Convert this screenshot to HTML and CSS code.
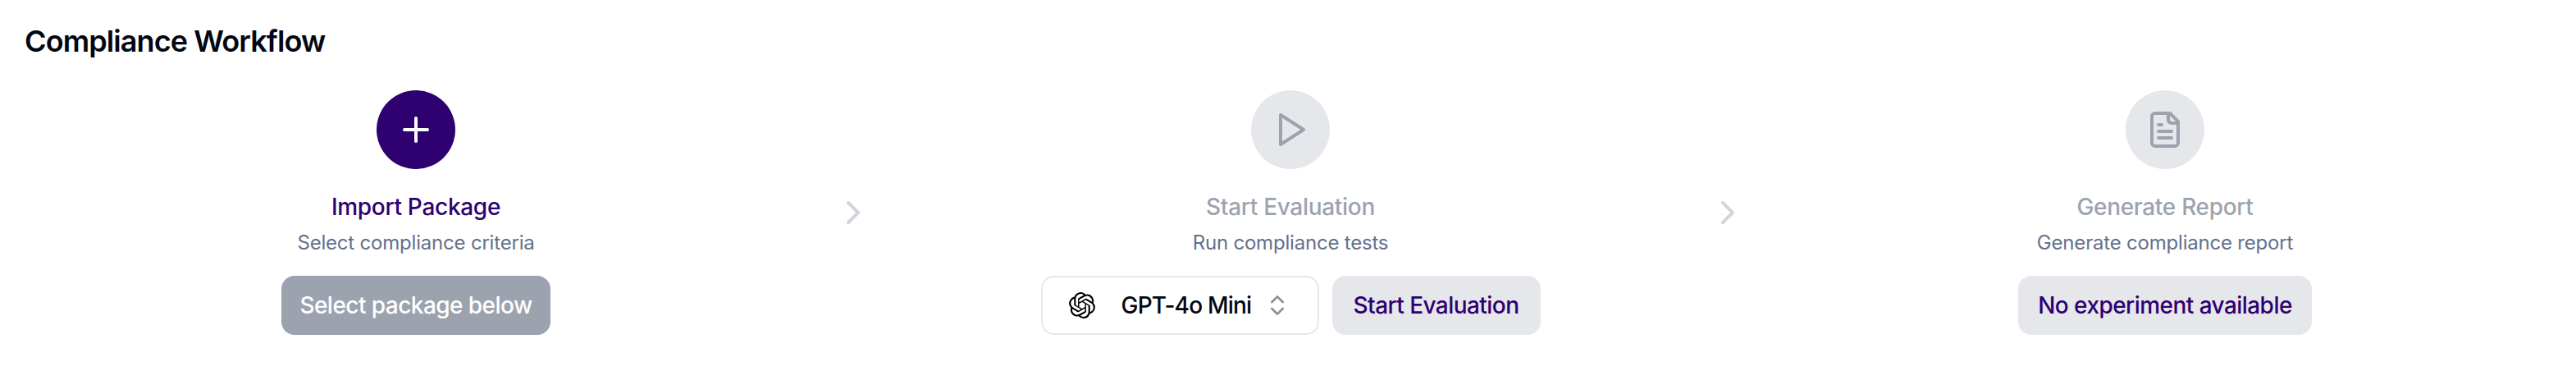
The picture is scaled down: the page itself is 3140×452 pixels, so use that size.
FILE: index.html
```html
<!DOCTYPE html>
<html>
<head>
  <meta charset="UTF-8">
  <meta name="viewport" content="width=device-width, initial-scale=1.0">
  <link rel="stylesheet" href="styles.css">
  <title>Compliance Workflow</title>
</head>
<body>
  <div class="workflow">
    <h1 class="workflow-title">Compliance Workflow</h1>
    <div class="steps">
      <div class="step">
        <div class="step-circle step-circle-active">
          <svg class="icon" viewBox="0 0 24 24"><path d="M5 12h14"/><path d="M12 5v14"/></svg>
        </div>
        <h2 class="step-name step-name-active">Import Package</h2>
        <p class="step-desc">Select compliance criteria</p>
        <div class="step-actions">
          <button class="btn btn-disabled">Select package below</button>
        </div>
      </div>

      <div class="step-arrow">
        <svg class="icon" viewBox="0 0 24 24"><path d="m9 18 6-6-6-6"/></svg>
      </div>

      <div class="step">
        <div class="step-circle">
          <svg class="icon" viewBox="0 0 24 24"><polygon points="6 3 20 12 6 21 6 3"/></svg>
        </div>
        <h2 class="step-name">Start Evaluation</h2>
        <p class="step-desc">Run compliance tests</p>
        <div class="step-actions">
          <div class="model-select">
            <svg class="model-logo" viewBox="0 0 24 24"><path d="M22.2819 9.8211a5.9847 5.9847 0 0 0-.5157-4.9108 6.0462 6.0462 0 0 0-6.5098-2.9A6.0651 6.0651 0 0 0 4.9807 4.1818a5.9847 5.9847 0 0 0-3.9977 2.9 6.0462 6.0462 0 0 0 .7427 7.0966 5.98 5.98 0 0 0 .511 4.9107 6.051 6.051 0 0 0 6.5146 2.9001A5.9847 5.9847 0 0 0 13.2599 24a6.0557 6.0557 0 0 0 5.7718-4.2058 5.9894 5.9894 0 0 0 3.9977-2.9001 6.0557 6.0557 0 0 0-.7475-7.0729zm-9.022 12.6081a4.4755 4.4755 0 0 1-2.8764-1.0408l.1419-.0804 4.7783-2.7582a.7948.7948 0 0 0 .3927-.6813v-6.7369l2.02 1.1686a.071.071 0 0 1 .038.052v5.5826a4.504 4.504 0 0 1-4.4945 4.4944zm-9.6607-4.1254a4.4708 4.4708 0 0 1-.5346-3.0137l.142.0852 4.783 2.7582a.7712.7712 0 0 0 .7806 0l5.8428-3.3685v2.3324a.0804.0804 0 0 1-.0332.0615L9.74 19.9502a4.4992 4.4992 0 0 1-6.1408-1.6464zM2.3408 7.8956a4.485 4.485 0 0 1 2.3655-1.9728V11.6a.7664.7664 0 0 0 .3879.6765l5.8144 3.3543-2.0201 1.1685a.0757.0757 0 0 1-.071 0l-4.8303-2.7865A4.504 4.504 0 0 1 2.3408 7.872zm16.5963 3.8558L13.1038 8.364 15.1192 7.2a.0757.0757 0 0 1 .071 0l4.8303 2.7913a4.4944 4.4944 0 0 1-.6765 8.1042v-5.6772a.79.79 0 0 0-.407-.667zm2.0107-3.0231l-.142-.0852-4.7735-2.7818a.7759.7759 0 0 0-.7854 0L9.409 9.2297V6.8974a.0662.0662 0 0 1 .0284-.0615l4.8303-2.7866a4.4992 4.4992 0 0 1 6.6802 4.66zM8.3065 12.863l-2.02-1.1638a.0804.0804 0 0 1-.038-.0567V6.0742a4.4992 4.4992 0 0 1 7.3757-3.4537l-.142.0805L8.704 5.459a.7948.7948 0 0 0-.3927.6813zm1.0976-2.3654l2.602-1.4998 2.6069 1.4998v2.9994l-2.5974 1.4997-2.6067-1.4997Z"/></svg>
            <span class="model-name">GPT-4o Mini</span>
            <svg class="icon model-caret" viewBox="0 0 24 24"><path d="m7 15 5 5 5-5"/><path d="m7 9 5-5 5 5"/></svg>
          </div>
          <button class="btn btn-soft btn-start">Start Evaluation</button>
        </div>
      </div>

      <div class="step-arrow">
        <svg class="icon" viewBox="0 0 24 24"><path d="m9 18 6-6-6-6"/></svg>
      </div>

      <div class="step">
        <div class="step-circle">
          <svg class="icon" viewBox="0 0 24 24"><path d="M15 2H6a2 2 0 0 0-2 2v16a2 2 0 0 0 2 2h12a2 2 0 0 0 2-2V7Z"/><path d="M14 2v4a2 2 0 0 0 2 2h4"/><path d="M10 9H8"/><path d="M16 13H8"/><path d="M16 17H8"/></svg>
        </div>
        <h2 class="step-name">Generate Report</h2>
        <p class="step-desc">Generate compliance report</p>
        <div class="step-actions">
          <button class="btn btn-soft">No experiment available</button>
        </div>
      </div>
    </div>
  </div>
</body>
</html>
```

FILE: styles.css
```css
body {
  font-family: Inter, "Liberation Sans", sans-serif;
  background-color: #fff;
  margin: 0;
  padding: 0;
}

.workflow {
  padding: 30px 24px 0 30px;
}

.workflow-title {
  font-size: 36px;
  line-height: 40px;
  font-weight: 600;
  color: #030712;
  letter-spacing: -0.9px;
  margin: 0 0 40px 0;
}

.steps {
  display: flex;
}

.step {
  flex: 1;
  display: flex;
  flex-direction: column;
  align-items: center;
}

.step-arrow {
  width: 112px;
  height: 298px;
  display: flex;
  align-items: center;
  justify-content: center;
  color: #d1d5db;
}

.icon {
  width: 48px;
  height: 48px;
  fill: none;
  stroke: currentColor;
  stroke-width: 2;
  stroke-linecap: round;
  stroke-linejoin: round;
}

.step-circle {
  width: 96px;
  height: 96px;
  border-radius: 50%;
  background-color: #e5e7eb;
  color: #9ca3af;
  display: flex;
  align-items: center;
  justify-content: center;
}

.step-circle-active {
  background-color: #2e0070;
  color: #fff;
}

.step-name {
  font-size: 28px;
  line-height: 40px;
  font-weight: 500;
  letter-spacing: -0.3px;
  color: #9ca3af;
  margin: 26px 0 0 0;
}

.step-name-active {
  color: #2e0070;
}

.step-desc {
  font-size: 24px;
  line-height: 32px;
  font-weight: 400;
  letter-spacing: -0.2px;
  color: #64708b;
  margin: 8px 0 0 0;
}

.step-actions {
  display: flex;
  gap: 16px;
  margin-top: 24px;
}

.btn {
  font-family: inherit;
  height: 72px;
  padding: 0 24px;
  border: none;
  border-radius: 16px;
  font-size: 28px;
  font-weight: 500;
  letter-spacing: -0.55px;
}

.btn-disabled {
  background-color: #9ca3af;
  color: #fff;
  padding: 0 22px;
}

.btn-soft {
  background-color: #e5e7eb;
  color: #2e0070;
}

.btn-start {
  padding: 0 26px;
}

.model-select {
  box-sizing: border-box;
  width: 339px;
  height: 72px;
  padding: 0 32px;
  border: 2px solid #e2e8f0;
  border-radius: 16px;
  background-color: #fff;
  display: flex;
  align-items: center;
}

.model-logo {
  width: 32px;
  height: 32px;
  fill: #000;
  flex-shrink: 0;
}

.model-name {
  font-size: 28px;
  font-weight: 500;
  letter-spacing: -0.8px;
  color: #030712;
  margin-left: 32px;
  white-space: nowrap;
}

.model-caret {
  width: 32px;
  height: 32px;
  color: #8b8f98;
  margin-left: 16px;
  flex-shrink: 0;
}
```
